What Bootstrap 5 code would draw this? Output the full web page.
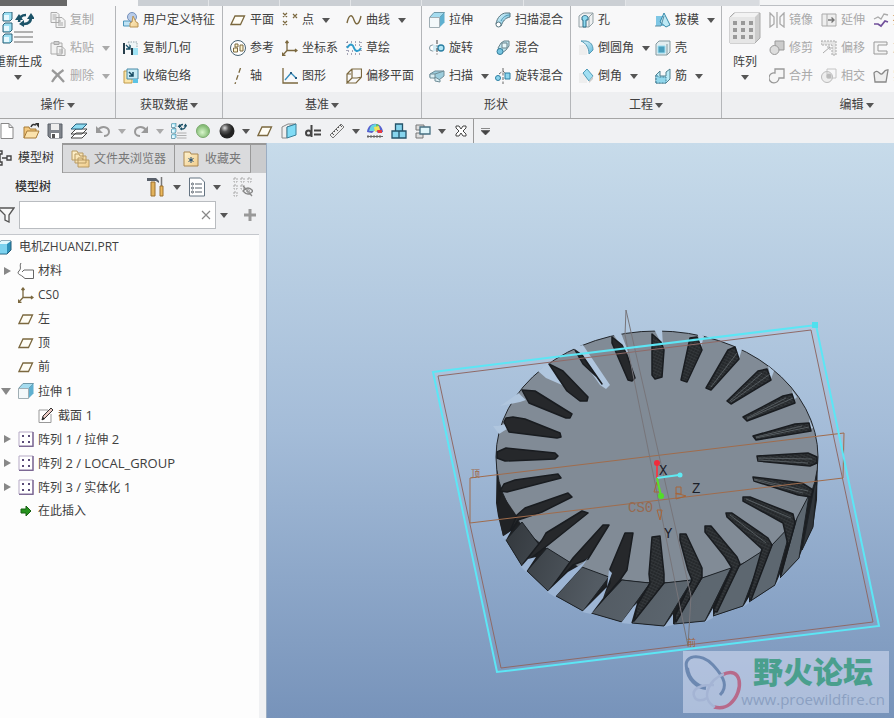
<!DOCTYPE html>
<html lang="zh-CN">
<head>
<meta charset="utf-8">
<meta name="viewport" content="width=device-width, initial-scale=1">
<title>电机ZHUANZI.PRT</title>
<link href="https://cdn.jsdelivr.net/npm/bootstrap@5.3.0/dist/css/bootstrap.min.css" rel="stylesheet">
<style>
body{font:12px/16px "Open Sans","Noto Sans CJK SC",sans-serif;color:#404040;background:#f0f1f3;overflow:hidden}
button{font:inherit;color:inherit;background:none;border:0;padding:0;white-space:nowrap}
button:disabled{color:#a9a9a9}
svg{flex:none;display:block}
.ico{width:16px;height:16px;overflow:visible}
.caret{flex:none;border:4px solid transparent;border-top:5px solid #555;border-bottom:0}
button:disabled .caret{border-top-color:#aaa}
.tabstrip{height:6px;background:#cbcfd4}
.tabstrip span{flex:0 0 71px;border-right:1px solid #e3e5e8}
.tabstrip .t-file{flex-basis:67px;background:#686868;border:0}
.tabstrip .t-on{background:#f8f8f9;border:0}
.tabstrip .t-wide{flex-basis:102px}
.tabstrip .t-alt{flex-basis:134px;background:#d8dbdf}
.tabstrip .t-rest{flex:1;background:#f3f4f5;border:0;border-bottom:1px solid #bcbfc3}
.ribbon{border-bottom:1px solid #a5a5a5;background:#f8f8f9}
.grp{flex:none;border-right:1px solid #b4b6b9}
.grp-body{height:86px;padding-left:7px}
.grp-foot{height:26px;background:#eeeff1;gap:2px}
.g-op{width:116px}.g-op .grp-body{padding:0}
.g-get{width:107px}.g-dat{width:199px}.g-shp{width:149px}.g-eng{width:151px}.g-edit{flex:1 0 270px}
.g-op .big{margin-left:-6px;width:48px;margin-right:8px}
.g-edit .big{width:32px;margin-right:8px}
.cmd{height:28px;gap:4px}
.c52{width:52px}.c64{width:64px}.c66{width:66px}.c77{width:77px}
.big .pic{width:32px;height:32px;margin-top:6px;margin-bottom:10px}
.big .caret{margin-top:5px}
.quick{height:24px;margin-left:-5px}
.quick button{width:24px;height:24px}
.quick .drop{width:14px}
.quick .more{border-left:1px solid #999}
.side{width:267px;background:#f0f1f3;border-right:1px solid #9badc2}
.ptabs{border-top:2px solid #999;background:#cacbcd;height:30px}
.ptabs button{color:#777;background:#dadbdd;border-right:1px solid #999;border-bottom:1px solid #aaa}
.ptabs .on{color:#333;background:#f0f1f3;border-bottom:0;width:63px;gap:6px;margin-top:-2px}
.pt2{width:112px;gap:4px}.pt3{width:76px;gap:6px}
.phead{height:28px;padding-left:15px}
.phead .title-txt{width:132px;color:#333;font-weight:500}
.pfilter{height:28px;margin-bottom:5px}
.pfilter .box{width:197px;height:28px;background:#fff;border:1px solid #b9bcc0;margin-left:4px}
.pfilter input{border:0;outline:0;background:none;min-width:0}
.tree{background:#fdfdfd;border-top:1px solid #c4c7cc;margin-right:7px}
.tree li{height:24px;gap:4px;white-space:nowrap}
.tree .tw{width:14px;flex:none;padding-left:4px}
.tree .lv0{margin-left:-4px;gap:7px}
.tree .lv2{padding-left:20px}
.lat{font-size:13px}
.tri-r{display:block;width:0;border:4px solid transparent;border-left:7px solid #888;border-right:0}
.tri-d{display:block;width:0;margin-left:-3px;border:5px solid transparent;border-top:7px solid #888;border-bottom:0}
.view{background:linear-gradient(#c7dbea,#a4bcd8 50%,#7793ba);min-width:0}
.scene{width:100%;height:100%}
.mono{font-family:"Liberation Mono",monospace;font-size:14px}
.wm{right:5px;bottom:5px;width:206px;height:62px;background:rgba(206,217,239,.62);overflow:hidden}
.wm-name{font:900 30px/38px "Noto Sans CJK SC",sans-serif;color:#4a9f8d}
.wm-url{font:15px/20px "Open Sans",sans-serif;color:#8ba0c2}
</style>
<script src="https://cdn.jsdelivr.net/npm/bootstrap@5.3.0/dist/js/bootstrap.bundle.min.js"></script>
</head>
<body class="vh-100 d-flex flex-column">
<svg class="position-absolute" width="0" height="0" aria-hidden="true">
<defs>
<linearGradient id="cy" x2="1" y2="1"><stop stop-color="#e6f8fc"/><stop offset="1" stop-color="#5fb9dc"/></linearGradient>
<linearGradient id="tan" x2="1" y2="1"><stop stop-color="#fff3cf"/><stop offset="1" stop-color="#f0cd8c"/></linearGradient>
<radialGradient id="grn" cx=".45" cy=".6"><stop stop-color="#d9f6cd"/><stop offset="1" stop-color="#86bd77"/></radialGradient>
<radialGradient id="blk" cx=".35" cy=".3"><stop stop-color="#ddd"/><stop offset=".5" stop-color="#555"/><stop offset="1" stop-color="#222"/></radialGradient>
<symbol id="plane" viewBox="0 0 16 16"><path d="M5 4h9.500l-4 8.500H1z" fill="#fffdf5" stroke="#7b683f" stroke-width="1.300"/></symbol>
<symbol id="csys" viewBox="0 0 16 16"><g fill="none" stroke="#7b683f" stroke-width="1.300"><path d="M5 1v9.500h10M5 10.500l-4.500 5M3.500 3L5 1l1.500 2M13 9l2 1.500-2 1.500M.5 12.500v3h3"/></g></symbol>
<symbol id="copy" viewBox="0 0 16 16"><g fill="#f2f2f2" stroke="#aaa"><path d="M1 .5h6l2 2v8H1zM6 5.500h6l3 3v7H6z"/><path d="M2.500 3h4M2.500 5h4M2.500 7h3M8 9h3M8 11h5M8 13h5"/></g></symbol>
<symbol id="paste" viewBox="0 0 16 16"><g fill="#f2f2f2" stroke="#aaa"><path d="M1 3h11v11H1zM4 1.500h5v3H4zM7 6.500h5l3 3v6H7z"/><path d="M9 10h4M9 12h4"/></g></symbol>
<symbol id="del" viewBox="0 0 16 16"><path d="M2 2c4 3 8 7 12 12M13.500 2C9 5 5 9 2 14" stroke="#999" stroke-width="2.200" fill="none"/></symbol>
<symbol id="udf" viewBox="0 0 16 16"><path d="M.5 9h7v5h-7z" fill="#bfe3f5" stroke="#4c95ba"/><circle cx="9" cy="5" r="4.500" fill="#b9cce8" stroke="#7590bb"/><path d="M10 4l3 6 2 1v4H7v-4l2-1z" fill="url(#tan)" stroke="#b99252"/></symbol>
<symbol id="cgeo" viewBox="0 0 16 16"><path d="M5 2h9v8H9z" fill="#eef5f7" stroke="#95a7ad" stroke-dasharray="1.500 1"/><path d="M9 8h6v7H9z" fill="#9fe3f5"/><path d="M1 3v11M9 8v7" stroke="#253d4a" stroke-width="2"/><path d="M3 5l4 4M7 5v4H3" stroke="#1b546d" fill="none" stroke-width="1.300"/></symbol>
<symbol id="shrink" viewBox="0 0 16 16"><path d="M1 3h8v12H1z" fill="#fbe5a9" stroke="#c09a49"/><path d="M4 1h11v10H4z" fill="#c9ebf5" stroke="#498ba8"/><path d="M6 4l4 4M10 4v4H6" stroke="#174b63" fill="none" stroke-width="1.500"/><path d="M10 11h5v4h-5z" fill="#5cc3e5"/></symbol>
<symbol id="pts" viewBox="0 0 16 16"><path d="M1 1l4 4m0-4L1 5M11 2l4 4m0-4l-4 4M1 9l4 4m0-4l-4 4" stroke="#7b683f" stroke-width="1.200"/></symbol>
<symbol id="curve" viewBox="0 0 16 16"><path d="M1 11C3 2 6 2 8 8s5 5 7-4" fill="none" stroke="#7b683f" stroke-width="1.400"/></symbol>
<symbol id="refs" viewBox="0 0 16 16"><circle cx="8" cy="8" r="7.500" fill="#fff" stroke="#476272"/><path d="M3.500 8h4v4h-4zM5 4h3v3H5zM10 5h3v6h-3z" fill="#fff4ce" stroke="#7b683f"/></symbol>
<symbol id="sketch" viewBox="0 0 16 16"><path d="M1 2h14M1 14h14M1 2v12M15 2v12M5 5h9M2 11h9" stroke="#557" stroke-dasharray="1 3"/><path d="M1 8C5 2 7 5 8 8s4 5 7 0" fill="none" stroke="#2c9bcb" stroke-width="2"/></symbol>
<symbol id="axis" viewBox="0 0 16 16"><path d="M10.500 0L5 16" stroke="#7b683f" stroke-width="1.300" stroke-dasharray="5 2.500"/></symbol>
<symbol id="graph" viewBox="0 0 16 16"><path d="M1 0v15h15" fill="none" stroke="#7b683f" stroke-width="1.300"/><path d="M3 12l6-7 5 5" stroke="#358dbd" fill="none" stroke-width="1.300"/><path d="M8 4h2v2H8zM13 9h2v2h-2z" fill="#255c83"/></symbol>
<symbol id="oplane" viewBox="0 0 16 16"><path d="M6 1h9.500v8L11 10H6zM6 1L1 6v9l5-5M1 15h9l5.500-6M1 6h4" fill="none" stroke="#7b683f" stroke-width="1.200"/></symbol>
<symbol id="extr" viewBox="0 0 16 16"><path d="M5 .5h10.500l-5 5H.5z" fill="#a5dcef" stroke="#6f98a8"/><path d="M10.500 5.500l5-5v10l-5 5z" fill="#5fb0d0"/><path d="M.5 5.500h10v10H.5z" fill="#f3f8fa" stroke="#a0aeb4"/></symbol>
<symbol id="rev" viewBox="0 0 16 16"><circle cx="3.500" cy="8" r="3" fill="#fff" stroke="#7f949e"/><path d="M4 5h8v6H4z" fill="#d5edf5"/><circle cx="12" cy="8" r="3" fill="#b1e5f5" stroke="#2b7fa3" stroke-width="1.300"/><path d="M8 0v16" stroke="#444" stroke-dasharray="4 1.500 1 1.500"/></symbol>
<symbol id="sweep" viewBox="0 0 16 16"><path d="M1 6l5-3h9v5l-5 4-4-2-5-1z" fill="#9ccddd" stroke="#708d99"/><path d="M1 6h5v4H1zM6 6l9-3M6 9l5 3v2l-5-1z" fill="#dceff4" stroke="#718e98"/></symbol>
<symbol id="sblend" viewBox="0 0 16 16"><path d="M1 12C2 5 7 1 11 1h4v4c-5 1-7 4-9 9z" fill="url(#cy)" stroke="#56747f"/><circle cx="3.500" cy="12.500" r="2.500" fill="#fff" stroke="#56747f"/><path d="M6 9c2-4 5-6 9-6" fill="none" stroke="#4c94b2"/></symbol>
<symbol id="blend" viewBox="0 0 16 16"><path d="M6 3l3-2h5v5l-3 4-4 3-4-5z" fill="#c1e4ee" stroke="#66818a"/><path d="M7 3h5v5H7z" fill="#e8f7fa" stroke="#66818a"/><circle cx="5" cy="11.500" r="3" fill="#77c5e1" stroke="#337b99"/></symbol>
<symbol id="rblend" viewBox="0 0 16 16"><circle cx="3" cy="10" r="2.500" fill="#8fd5ec" stroke="#2b7fa3"/><path d="M10 5h5v6h-5z" fill="#8fd5ec" stroke="#2b7fa3"/><path d="M4 6l4-3 2 2M8 0v16" fill="none" stroke="#666" stroke-dasharray="3 1.500"/></symbol>
<symbol id="hole" viewBox="0 0 16 16"><path d="M1 4l4-3h10v10l-4 4H1z" fill="#eef0f1" stroke="#92a0a5"/><path d="M11 5v10M11 5l4-4" stroke="#92a0a5"/><path d="M4 5c2-2 4-2 6 0v3H8v7H5V8H4z" fill="#8fd9ef" stroke="#2d6c87"/></symbol>
<symbol id="round" viewBox="0 0 16 16"><path d="M1 5h8v10H1z" fill="#eee"/><path d="M3 1h5c5 1 7 4 7 9l-4 4c0-6-3-11-8-13z" fill="url(#cy)" stroke="#559ab5"/></symbol>
<symbol id="chamf" viewBox="0 0 16 16"><path d="M1 5h8v10H1z" fill="#eee"/><path d="M5 5l4-4 6 7-4 5z" fill="#a1dff2" stroke="#4f9bb8"/><path d="M11 13l4-5v3l-4 4z" fill="#ccc"/></symbol>
<symbol id="draft" viewBox="0 0 16 16"><path d="M1 4h8v10H1z" fill="#7fc7e5"/><path d="M9 1l6 12-4 2-6-5z" fill="#bde9f5" stroke="#378aab"/><path d="M0 14h6l3-10" stroke="#5d8da2" fill="none"/></symbol>
<symbol id="shell" viewBox="0 0 16 16"><path d="M1 4l3-3h11v11l-3 3H1z" fill="#e2edf0" stroke="#84999f"/><path d="M12 4v11" stroke="#84999f"/><path d="M3 6h7v7H3z" fill="#4b9fbd" stroke="#9edef2"/></symbol>
<symbol id="rib" viewBox="0 0 16 16"><path d="M1 7l4-4v5h6V4l4-3v10l-4 4H1z" fill="#bcebf7" stroke="#51808f"/><path d="M1 15V7l3 2h7v6z" fill="#91d7ec" stroke="#407f98" stroke-dasharray="2 1"/></symbol>
<symbol id="mirror" viewBox="0 0 16 16"><path d="M1 1l4 4v7l-4 3zM15 1l-4 4v7l4 3zM8 0v16" fill="none" stroke="#aaa" stroke-width="1.300"/></symbol>
<symbol id="trim" viewBox="0 0 16 16"><path d="M6 1h9v9H6z" fill="#ccc" stroke="#999"/><circle cx="5.500" cy="10" r="4.500" fill="#ddd" stroke="#999"/></symbol>
<symbol id="merge" viewBox="0 0 16 16"><path d="M6 1h9v9h-5a5 5 0 1 1-4-5z" fill="#f5f5f5" stroke="#999" stroke-width="1.300"/></symbol>
<symbol id="inter" viewBox="0 0 16 16"><circle cx="6" cy="9" r="5.500" fill="#eee" stroke="#bbb"/><path d="M6 1h9v9H6z" fill="none" stroke="#c4c4c4"/><circle cx="8" cy="8" r="2.500" fill="#bbb"/></symbol>
<symbol id="extend" viewBox="0 0 16 16"><path d="M1 2h5v12H1zM6 2h9v12H6" fill="#eee" stroke="#aaa"/><path d="M7 8h6M10.500 5.500L13 8l-2.500 2.500" fill="none" stroke="#777" stroke-width="1.400"/></symbol>
<symbol id="offset" viewBox="0 0 16 16"><path d="M0 1h15v14h-4V5H0z" fill="#e4e4e4" stroke="#aaa" stroke-dasharray="2 1"/><path d="M2 13l7-6M6 7h3v3" fill="none" stroke="#aaa"/></symbol>
<symbol id="proj" viewBox="0 0 16 16"><path d="M1 7l4-2 3 2 3-5 4 1" fill="none" stroke="#aaa" stroke-width="1.300"/><path d="M1 12h4l3 2 4-5 3 1" fill="none" stroke="#71509b" stroke-width="1.700"/></symbol>
<symbol id="thick" viewBox="0 0 16 16"><path d="M14 2H1v12h13v-3H5V5h9z" fill="#f4f4f4" stroke="#999"/></symbol>
<symbol id="solid" viewBox="0 0 16 16"><path d="M1 5c4-5 6 4 9 0s4-3 5-3l-2 12H2z" fill="#eee" stroke="#888" stroke-width="1.300"/></symbol>
<symbol id="patt" viewBox="0 0 16 16"><path d="M1 1h14v14H1z" fill="#fff" stroke="#b5a9c5"/><path d="M15 1v14.500H1" fill="none" stroke="#7c6894" stroke-width="1.400"/><path d="M4 4h2v2H4zM10 4h2v2h-2zM4 10h2v2H4zM10 10h2v2h-2z" fill="#594b78"/></symbol>
<symbol id="regen" viewBox="0 0 32 32"><g fill="#9ce0f4" stroke="#2c6177"><path d="M1 2l2-2h7v7l-2 2H1zM1 13l2-2h7v7l-2 2H1zM1 24l2-2h7v7l-2 2H1z"/></g><g fill="#e6f9ff"><path d="M2 3h5v5H2zM2 14h5v5H2zM2 25h5v5H2z"/></g><path d="M12 20h19M12 25h19M12 30h19" stroke="#999" stroke-width="1.500"/><path d="M17 10c0-5 3-7 7-7M29 5c0 5-3 7-7 7" fill="none" stroke="#1c5368" stroke-width="2.600"/><path d="M13 8h8l-4-6zM25 7h8l-4-6zM22 8v7l-5-3z" fill="#1c5368"/></symbol>
<symbol id="cube" viewBox="0 0 16 16"><path d="M1 5l4-3h10v9l-4 4H1z" fill="#2d91b9" stroke="#255d78"/><path d="M1.500 5h9.500v9.500H1.500z" fill="#7ed3ef"/><path d="M2 5l3-3h10l-4 3z" fill="#e1f8fd"/></symbol>
<symbol id="folder" viewBox="0 0 16 16"><path d="M1 3V1h6l1 2h7v12H1z" fill="url(#tan)" stroke="#aa8750"/></symbol>
</defs>
</svg>

<div class="tabstrip d-flex flex-shrink-0"><span class="t-file"></span><span class="t-on"></span><span></span><span></span><span></span><span></span><span class="t-wide"></span><span class="t-wide"></span><span class="t-alt"></span><span class="t-rest"></span></div>
<header class="ribbon d-flex flex-shrink-0 overflow-hidden">
 <section class="grp g-op">
  <div class="grp-body d-flex">
   <button class="big d-flex flex-column align-items-center"><svg class="pic"><use href="#regen"/></svg><span>重新生成</span><i class="caret"></i></button>
   <div>
    <button class="cmd d-flex align-items-center" disabled><svg class="ico"><use href="#copy"/></svg>复制</button>
    <button class="cmd d-flex align-items-center" disabled><svg class="ico"><use href="#paste"/></svg>粘贴<i class="caret ms-1"></i></button>
    <button class="cmd d-flex align-items-center" disabled><svg class="ico"><use href="#del"/></svg>删除<i class="caret ms-1"></i></button>
   </div>
  </div>
  <button class="grp-foot w-100 d-flex align-items-center justify-content-center">操作<i class="caret"></i></button>
 </section>
 <section class="grp g-get">
  <div class="grp-body">
   <button class="cmd d-flex align-items-center"><svg class="ico"><use href="#udf"/></svg>用户定义特征</button>
   <button class="cmd d-flex align-items-center"><svg class="ico"><use href="#cgeo"/></svg>复制几何</button>
   <button class="cmd d-flex align-items-center"><svg class="ico"><use href="#shrink"/></svg>收缩包络</button>
  </div>
  <button class="grp-foot w-100 d-flex align-items-center justify-content-center">获取数据<i class="caret"></i></button>
 </section>
 <section class="grp g-dat">
  <div class="grp-body d-flex">
   <div class="c52">
    <button class="cmd d-flex align-items-center"><svg class="ico"><use href="#plane"/></svg>平面</button>
    <button class="cmd d-flex align-items-center"><svg class="ico"><use href="#refs"/></svg>参考</button>
    <button class="cmd d-flex align-items-center"><svg class="ico"><use href="#axis"/></svg>轴</button>
   </div>
   <div class="c64">
    <button class="cmd d-flex align-items-center"><svg class="ico"><use href="#pts"/></svg>点<i class="caret ms-1"></i></button>
    <button class="cmd d-flex align-items-center"><svg class="ico"><use href="#csys"/></svg>坐标系</button>
    <button class="cmd d-flex align-items-center"><svg class="ico"><use href="#graph"/></svg>图形</button>
   </div>
   <div>
    <button class="cmd d-flex align-items-center"><svg class="ico"><use href="#curve"/></svg>曲线<i class="caret ms-1"></i></button>
    <button class="cmd d-flex align-items-center"><svg class="ico"><use href="#sketch"/></svg>草绘</button>
    <button class="cmd d-flex align-items-center"><svg class="ico"><use href="#oplane"/></svg>偏移平面</button>
   </div>
  </div>
  <button class="grp-foot w-100 d-flex align-items-center justify-content-center">基准<i class="caret"></i></button>
 </section>
 <section class="grp g-shp">
  <div class="grp-body d-flex">
   <div class="c66">
    <button class="cmd d-flex align-items-center"><svg class="ico"><use href="#extr"/></svg>拉伸</button>
    <button class="cmd d-flex align-items-center"><svg class="ico"><use href="#rev"/></svg>旋转</button>
    <button class="cmd d-flex align-items-center"><svg class="ico"><use href="#sweep"/></svg>扫描<i class="caret ms-1"></i></button>
   </div>
   <div>
    <button class="cmd d-flex align-items-center"><svg class="ico"><use href="#sblend"/></svg>扫描混合</button>
    <button class="cmd d-flex align-items-center"><svg class="ico"><use href="#blend"/></svg>混合</button>
    <button class="cmd d-flex align-items-center"><svg class="ico"><use href="#rblend"/></svg>旋转混合</button>
   </div>
  </div>
  <div class="grp-foot d-flex align-items-center justify-content-center">形状</div>
 </section>
 <section class="grp g-eng">
  <div class="grp-body d-flex">
   <div class="c77">
    <button class="cmd d-flex align-items-center"><svg class="ico"><use href="#hole"/></svg>孔</button>
    <button class="cmd d-flex align-items-center"><svg class="ico"><use href="#round"/></svg>倒圆角<i class="caret ms-1"></i></button>
    <button class="cmd d-flex align-items-center"><svg class="ico"><use href="#chamf"/></svg>倒角<i class="caret ms-1"></i></button>
   </div>
   <div>
    <button class="cmd d-flex align-items-center"><svg class="ico"><use href="#draft"/></svg>拔模<i class="caret ms-1"></i></button>
    <button class="cmd d-flex align-items-center"><svg class="ico"><use href="#shell"/></svg>壳</button>
    <button class="cmd d-flex align-items-center"><svg class="ico"><use href="#rib"/></svg>筋<i class="caret ms-1"></i></button>
   </div>
  </div>
  <button class="grp-foot w-100 d-flex align-items-center justify-content-center">工程<i class="caret"></i></button>
 </section>
 <section class="grp g-edit">
  <div class="grp-body d-flex">
   <button class="big d-flex flex-column align-items-center"><svg class="pic" viewBox="0 0 32 32"><path d="M1 5l4-4h26v25l-5 5H1z" fill="#ccc" stroke="#aaa"/><path d="M1 5h25v26H1z" fill="#e6e6e6"/><path d="M2 5l4-4h24l-4 4z" fill="#f3f3f3"/><g stroke="#999" stroke-width="4" stroke-dasharray="4 4"><path d="M4 11h21M4 18h21M4 25h21"/></g></svg><span>阵列</span><i class="caret"></i></button>
   <div class="c52">
    <button class="cmd d-flex align-items-center" disabled><svg class="ico"><use href="#mirror"/></svg>镜像</button>
    <button class="cmd d-flex align-items-center" disabled><svg class="ico"><use href="#trim"/></svg>修剪</button>
    <button class="cmd d-flex align-items-center" disabled><svg class="ico"><use href="#merge"/></svg>合并</button>
   </div>
   <div class="c52">
    <button class="cmd d-flex align-items-center" disabled><svg class="ico"><use href="#extend"/></svg>延伸</button>
    <button class="cmd d-flex align-items-center" disabled><svg class="ico"><use href="#offset"/></svg>偏移</button>
    <button class="cmd d-flex align-items-center" disabled><svg class="ico"><use href="#inter"/></svg>相交</button>
   </div>
   <div>
    <button class="cmd d-flex align-items-center"><svg class="ico"><use href="#proj"/></svg>投影</button>
    <button class="cmd d-flex align-items-center" disabled><svg class="ico"><use href="#thick"/></svg>加厚</button>
    <button class="cmd d-flex align-items-center" disabled><svg class="ico"><use href="#solid"/></svg>实体化</button>
   </div>
  </div>
  <button class="grp-foot w-100 d-flex align-items-center justify-content-center">编辑<i class="caret"></i></button>
 </section>
</header>

<nav class="quick d-flex align-items-center flex-shrink-0" aria-label="快速访问">
 <button class="d-flex align-items-center justify-content-center" aria-label="新建"><svg class="ico" viewBox="0 0 16 16"><path d="M2 .5h8l4 4v11H2zM10 .5v4h4" fill="#fff" stroke="#888"/></svg></button>
 <button class="d-flex align-items-center justify-content-center" aria-label="打开"><svg class="ico" viewBox="0 0 16 16"><path d="M1 15V4h5l1 2h6v3" fill="#f3c87d" stroke="#a77a36"/><path d="M1 15l3-7h12l-3 7z" fill="#fbe2ac" stroke="#a77a36"/><path d="M8 4c1-3 3-3 5-2" fill="none" stroke="#333" stroke-width="1.500"/><path d="M12 0h4v5z" fill="#333"/></svg></button>
 <button class="d-flex align-items-center justify-content-center" aria-label="保存"><svg class="ico" viewBox="0 0 16 16"><path d="M1 1h14v14H3l-2-2z" fill="#80858c" stroke="#5b6068"/><path d="M4 1h8v6H4z" fill="#eee"/><path d="M4 10h8v5H4z" fill="#fff"/><path d="M5 11h3v4H5z" fill="#555"/></svg></button>
 <button class="d-flex align-items-center justify-content-center" aria-label="层"><svg class="ico" viewBox="0 0 16 16"><path d="M5 10h11l-5 5H0zM5 6h11l-5 5H0z" fill="#fff" stroke="#444"/><path d="M5 1h11l-5 5H0z" fill="#8fdcf2" stroke="#28617d"/></svg></button>
 <button class="d-flex align-items-center justify-content-center" aria-label="撤消"><svg class="ico" viewBox="0 0 16 16"><path d="M3 7c4-5 11-3 11 2 0 3-3 4-5 4" fill="none" stroke="#999" stroke-width="2"/><path d="M1 3v7h7z" fill="#999"/></svg></button>
 <button class="drop d-flex justify-content-center align-items-center" disabled aria-label="撤消列表"><i class="caret"></i></button>
 <button class="d-flex align-items-center justify-content-center" aria-label="重做"><svg class="ico" viewBox="0 0 16 16"><path d="M13 7C9 2 2 4 2 9c0 3 3 4 5 4" fill="none" stroke="#999" stroke-width="2"/><path d="M15 3v7H8z" fill="#999"/></svg></button>
 <button class="drop d-flex justify-content-center align-items-center" disabled aria-label="重做列表"><i class="caret"></i></button>
 <button class="d-flex align-items-center justify-content-center" aria-label="重新生成"><svg class="ico"><use href="#regen"/></svg></button>
 <button class="d-flex align-items-center justify-content-center" aria-label="外观"><svg class="ico" viewBox="0 0 16 16"><circle cx="8" cy="8" r="6.500" fill="url(#grn)" stroke="#7cab70"/></svg></button>
 <button class="d-flex align-items-center justify-content-center" aria-label="着色"><svg class="ico" viewBox="0 0 16 16"><circle cx="8" cy="8" r="7.500" fill="url(#blk)"/></svg></button>
 <button class="drop d-flex justify-content-center align-items-center" aria-label="着色列表"><i class="caret"></i></button>
 <button class="d-flex align-items-center justify-content-center" aria-label="平面"><svg class="ico"><use href="#plane"/></svg></button>
 <button class="d-flex align-items-center justify-content-center" aria-label="视图"><svg class="ico" viewBox="0 0 16 16"><path d="M1 4l6-3h8l-9 3v11H1z" fill="#eee" stroke="#888"/><path d="M6 4l9-3v11l-9 3z" fill="#80dbf5" stroke="#397e98"/></svg></button>
 <button class="d-flex align-items-center justify-content-center" aria-label="尺寸"><svg class="ico" viewBox="0 0 16 16"><g fill="none" stroke="#444" stroke-width="2"><circle cx="3.500" cy="10" r="2.500"/><path d="M6.500 2v12M9 7.500h7M9 11.500h7"/></g></svg></button>
 <button class="d-flex align-items-center justify-content-center" aria-label="测量"><svg class="ico" viewBox="0 0 16 16"><path d="M1 12L12 1l3 3L4 15z" fill="#eee" stroke="#777"/><path d="M3 10l2 2M5 8l1 1M7 6l2 2M9 4l1 1M11 2l2 2" stroke="#555"/></svg></button>
 <button class="drop d-flex justify-content-center align-items-center" aria-label="测量列表"><i class="caret"></i></button>
 <button class="d-flex align-items-center justify-content-center" aria-label="分析"><svg class="ico" viewBox="0 0 16 16"><path d="M0 9C1-2 15-2 16 9l-5 1-3-3-3 3z" fill="#5660cf"/><path d="M5 3l6-2 2 7H7z" fill="#62cc56"/><path d="M3 5c1-3 3-4 6-4v7H2z" fill="#65d4df"/><path d="M7 4l5-1 1 4-5 2z" fill="#f0e359"/><path d="M10 7h5v3h-4z" fill="#e53c43"/><path d="M0 13.500h16M1 12v3M4 12v3M7 12v3M10 12v3M13 12v3" stroke="#666"/></svg></button>
 <button class="d-flex align-items-center justify-content-center" aria-label="装配"><svg class="ico" viewBox="0 0 16 16"><path d="M4.500 1h7v7h-7zM1 8h7v7H1zM8 8h7v7H8z" fill="#86d4ed" stroke="#24536a" stroke-width="1.300"/></svg></button>
 <button class="d-flex align-items-center justify-content-center" aria-label="窗口"><svg class="ico" viewBox="0 0 16 16"><path d="M1 2h8v5H1zM1 10h7v5H1z" fill="#ddd" stroke="#777"/><path d="M5 4h10v7H5z" fill="#dff5fa" stroke="#456e80" stroke-width="1.300"/></svg></button>
 <button class="drop d-flex justify-content-center align-items-center" aria-label="窗口列表"><i class="caret"></i></button>
 <button class="d-flex align-items-center justify-content-center" aria-label="关闭"><svg class="ico" viewBox="0 0 16 16"><path d="M3 3h3l2 3 2-3h3v2l-3 3 3 3v2h-3l-2-3-2 3H3v-2l3-3-3-3z" fill="#fff" stroke="#444"/></svg></button>
 <button class="more d-flex flex-column align-items-center justify-content-center" aria-label="自定义"><svg width="9" height="7"><path d="M0 .5h9M0 2.500h9L4.500 7z" fill="#444" stroke="#444" stroke-width=".6"/></svg></button>
</nav>

<main class="d-flex flex-grow-1 overflow-hidden">
 <aside class="side d-flex flex-column flex-shrink-0">
  <div class="ptabs d-flex flex-shrink-0">
   <button class="on d-flex align-items-center"><svg width="12" height="16" viewBox="0 0 12 16"><path d="M0 1h2v3H0M0 12h2v3H0M2 8h5M0 4v8M7 6h4v4H7z" fill="none" stroke="#444" stroke-width="1.400"/></svg>模型树</button>
   <button class="pt2 d-flex align-items-center ps-2"><svg width="19" height="18" viewBox="0 0 19 18"><g fill="url(#tan)" stroke="#b89a63"><path d="M1 10V1h5l1 2h5v7zM4 13V4h4l1 2h6v7zM7 17V8h4l1 2h6v7z"/></g></svg>文件夹浏览器</button>
   <button class="pt3 d-flex align-items-center ps-2"><svg class="ico" viewBox="0 0 16 16"><use href="#folder"/><path d="M8 6v6M5.500 7.500l5 3M10.500 7.500l-5 3" stroke="#234d72"/></svg>收藏夹</button>
  </div>
  <div class="phead d-flex align-items-center flex-shrink-0">
   <span class="title-txt">模型树</span>
   <button aria-label="设置"><svg width="18" height="20" viewBox="0 0 18 20"><path d="M0 1h9l3 3v2L9 4H0z" fill="#59606a"/><path d="M4 5h4v14H4z" fill="#e2b25b" stroke="#9b7030"/><path d="M14.500 0v9" stroke="#777" stroke-width="1.500"/><path d="M13 9h3v10h-3z" fill="#edb95b" stroke="#9b7030"/></svg></button>
   <i class="caret ms-2"></i>
   <button class="ms-2" aria-label="显示"><svg width="16" height="20" viewBox="0 0 16 20"><path d="M.5 1h11l4 4v14H.5z" fill="#fff" stroke="#657482"/><path d="M6 7h7M6 11h7M6 15h7" stroke="#57616b"/><g fill="none" stroke="#57616b"><circle cx="3.500" cy="7" r="1"/><circle cx="3.500" cy="11" r="1"/><circle cx="3.500" cy="15" r="1"/></g></svg></button>
   <i class="caret ms-2"></i>
   <button class="ms-2 ps-1" disabled aria-label="隐藏"><svg width="20" height="20" viewBox="0 0 20 20"><g fill="none" stroke="#aaa"><path d="M1 1h3v4H1zM1 8h3v4H1zM1 15h3v4H1zM8 1h3v4H8zM15 1h3v4h-3zM8 8h3v4H8z" stroke-dasharray="2 1"/><path d="M10 14q5-6 10 0-5 6-10 0zM10 9l9 10" stroke="#888" stroke-width="1.300"/><circle cx="15" cy="14" r="1.500"/></g></svg></button>
  </div>
  <div class="pfilter d-flex align-items-center flex-shrink-0">
   <svg width="15" height="16" viewBox="0 0 15 16"><path d="M-2 1h16L9 8v7l-4-2V8z" fill="#f8f8f8" stroke="#555" stroke-width="1.300"/></svg>
   <div class="box d-flex align-items-center pe-1"><input class="flex-grow-1" type="text" aria-label="筛选"><button aria-label="清除"><svg width="10" height="10"><path d="M1 1l8 8M9 1L1 9" stroke="#888" stroke-width="1.200"/></svg></button></div>
   <i class="caret ms-1 me-3"></i>
   <button aria-label="添加"><svg width="12" height="12"><path d="M6 0v12M0 6h12" stroke="#999" stroke-width="3"/></svg></button>
  </div>
  <ul class="tree list-unstyled mb-0 flex-grow-1">
   <li class="lv0 d-flex align-items-center"><svg class="ico"><use href="#cube"/></svg>电机ZHUANZI.PRT</li>
   <li class="d-flex align-items-center"><span class="tw"><i class="tri-r"></i></span><svg class="ico" viewBox="0 0 16 16"><path d="M3 0C1 3 4 5 1 8s2 4 3 5l3 2.500h8.500V7H6L4 9" fill="#fff" stroke="#666"/></svg>材料</li>
   <li class="d-flex align-items-center"><span class="tw"></span><svg class="ico"><use href="#csys"/></svg>CS0</li>
   <li class="d-flex align-items-center"><span class="tw"></span><svg class="ico"><use href="#plane"/></svg>左</li>
   <li class="d-flex align-items-center"><span class="tw"></span><svg class="ico"><use href="#plane"/></svg>顶</li>
   <li class="d-flex align-items-center"><span class="tw"></span><svg class="ico"><use href="#plane"/></svg>前</li>
   <li class="d-flex align-items-center"><span class="tw"><i class="tri-d"></i></span><svg class="ico"><use href="#extr"/></svg><span>拉伸<span class="lat"> 1</span></span></li>
   <li class="lv2 d-flex align-items-center"><span class="tw"></span><svg class="ico" viewBox="0 0 16 16"><path d="M1 3h9M13 7v8.500H1V3" fill="#fff" stroke="#999"/><path d="M4 13l1-4 8-8 2 2-8 8z" fill="#eac9c2" stroke="#333"/><path d="M4 13l1-3 2 2z" fill="#222"/></svg><span>截面<span class="lat"> 1</span></span></li>
   <li class="d-flex align-items-center"><span class="tw"><i class="tri-r"></i></span><svg class="ico"><use href="#patt"/></svg><span>阵列<span class="lat"> 1 / </span>拉伸<span class="lat"> 2</span></span></li>
   <li class="d-flex align-items-center"><span class="tw"><i class="tri-r"></i></span><svg class="ico"><use href="#patt"/></svg><span>阵列<span class="lat"> 2 / LOCAL_GROUP</span></span></li>
   <li class="d-flex align-items-center"><span class="tw"><i class="tri-r"></i></span><svg class="ico"><use href="#patt"/></svg><span>阵列<span class="lat"> 3 / </span>实体化<span class="lat"> 1</span></span></li>
   <li class="d-flex align-items-center"><span class="tw"></span><svg class="ico" viewBox="0 0 16 16"><path d="M3 6h5V3l5 5-5 5v-3H3z" fill="#27931e" stroke="#176112"/></svg>在此插入</li>
  </ul>
 </aside>
 <section class="view flex-grow-1 position-relative">
  <svg class="scene" viewBox="267 143 627 575" role="img" aria-label="转子模型">
   <defs>
    <linearGradient id="rim" gradientUnits="userSpaceOnUse" x1="500" x2="700" y1="540" y2="600"><stop stop-color="#33383d"/><stop offset=".5" stop-color="#535b63"/><stop offset="1" stop-color="#5d6770"/></linearGradient>
    <pattern id="hatch" width="3" height="3" patternUnits="userSpaceOnUse" patternTransform="rotate(25)"><path d="M0 0h3v3H0z" fill="#25282b"/><path d="M0 0v3M0 1.500h3" stroke="#3c4145" stroke-width=".6"/></pattern>
   </defs>
   <!-- rotor body and front face -->
   <path d="M497 450L496 503L498 516L503 536L506 540L522 566L527 571L548 591L556 596L583 611L591 613L622 622L632 623L664 626L674 624L705 621L713 616L743 606L749 602L775 585L780 578L799 558L802 550L813 527L817 500L818 458z" fill="#1d1f22"/>
   <ellipse cx="657" cy="457" rx="161" ry="126" fill="#818b96" stroke="#22262b"/>
   <g fill="url(#rim)" stroke="#1d2227">
    <path d="M522 522L506 540L522 566L540 546z"/><path d="M547 548L527 571L548 591L571 563z"/><path d="M582 567L556 596L583 611L609 577z"/><path d="M622 580L591 613L622 622L650 583z"/><path d="M664 583L632 623L664 626L692 580z"/><path d="M702 578L674 624L705 621L731 568z"/><path d="M739 566L713 616L743 606L764 550z"/><path d="M772 545L749 602L775 585L792 524z"/><path d="M797 518L780 578L799 558L809 495z"/><path d="M814 488L802 550L813 527L817 480z" fill="#30353a"/>
   </g>
   <path d="M502 494L497 508L503 536L512 530L519 519z" fill="#202225"/>
   <!-- open slot mouths on the far side -->
   <g fill="#b0c6de">
    <path d="M493 426h5l7-2 2 5-8 5zM500 406l19-13 5 4-8-6 10 9-6 2zM538 371L549 362L557 378L569 391L562 385L546 378zM573 347L583 345L610 385L606 389L600 385zM613 334L621 333L629 354L624 350zM654 329h8l1 18zM697 332l7 4-3 11zM735 344l7 5-3 10zM768 366l6 5-3 8zM792 390l5 7-3 3zM809 419l4 9-3 1z"/>
   </g>
   <g fill="#26282b" stroke="#191c20" stroke-linejoin="round" stroke-width="1.500">
    <path d="M555 453L506 448L497 452V458L505 461L555 459L558 456z"/>
    <path d="M506 418L513 417L525 419L560 433L561 437L557 438L509 432L504 422z"/>
    <path d="M522 390L535 391L572 414L570 418L566 418L529 403z"/>
    <path d="M549 364L563 371L588 397L587 401L580 401L567 391z"/>
    <path d="M575 350L582 355L602 384L597 377L583 364z"/>
    <path d="M612 337L622 345L627 355L635 378L632 381L628 380L612 343z"/>
    <path d="M625 533L633 533L627 570L620 580L593 611L610 583L610 569z"/>
    <path d="M603 525L609 525L588 559L573 565L550 590L573 558z"/>
    <path d="M582 511L588 513L548 545L535 555L523 564L542 540L546 533z"/>
    <path d="M568 493L572 497L542 512L518 520L508 536L517 515L525 508z"/>
    <path d="M558 474L561 478L507 492L500 491L504 484L515 480z"/>
   </g>
   <g fill="url(#hatch)" stroke="#191c20" stroke-linejoin="round" stroke-width="1.500">
    <path d="M652 334L661 342L664 350L662 377L655 379L652 375z"/><path d="M690 338L697 337L702 350L687 382L681 380z"/><path d="M728 350L735 347L739 359L711 390L706 388z"/><path d="M758 371L767 369L771 380L731 404L727 401z"/><path d="M783 396L792 394L795 403L747 421L743 417z"/><path d="M795 424L809 423L811 431L756 440L753 436z"/><path d="M757 456L808 453L817 457V463L810 466L758 461z"/><path d="M753 477L802 483L813 490L811 497L798 495L754 481z"/><path d="M743 497L750 497L793 514L795 523L781 575L788 545L783 523L743 501z"/><path d="M726 513L732 513L768 538L772 545L751 600L748 598L762 549L727 517z"/><path d="M705 526L711 526L737 557L740 564L717 612L713 611L732 568L725 557L705 532z"/><path d="M680 534L686 534L702 568L702 577L676 622L675 616L692 580L688 570L680 540z"/><path d="M652 537L660 536L664 574L664 583L634 621L637 606L650 583L649 574z"/>
   </g>
   <!-- background seen through the near slots -->
   <path d="M502 537l9-6-5 9zM521 567L528 559L536 557L526 572zM547 592L568 572L582 564L588 558L582 567L555 597zM582 612L607 587L609 570L612 573L603 598L591 614zM621 623L633 607L637 603L631 624zM664 627l9-13 0 11zM705 622l8-14 0 10zM743 607l6-10 0 6zM775 586l5-12v6z" fill="#9db5d4"/>
   <g fill="none" stroke="#71787e" stroke-width=".6"><path d="M758 458L812 459M758 460L808 463M756 438L809 427M756 437L802 426M747 419L793 398M747 418L786 398M731 402L770 374M730 401L762 373M711 387L737 353M754 479L808 491M754 480L803 493M746 499L791 518M730 515L766 543"/></g>
   <!-- datum planes -->
   <g fill="none" stroke-width="1">
    <path d="M438 376L811 330L873 622L501 668z" stroke="#8f6a67"/>
    <path d="M470 478L844 433L843 478L470 523z" stroke="#a06c4c"/>
    <path d="M626 310L691 596L688 646L625 335z" stroke="#77757a"/>
    <path d="M433 372L816 325L879 626L497 672z" stroke="#5ce6f5" stroke-width="2"/>
   </g>
   <path d="M812 322h6v6h-6z" fill="#4fe0ee"/>
   <g fill="#a06540" font-size="9"><text x="471" y="477">顶</text><text x="687" y="646">前</text></g>
   <!-- coordinate system -->
   <path d="M657 482l-3 10h6zM676 493l10 3-10 3zM657 510l3 10 2-10zM676 487h5v7h-5z" fill="none" stroke="#a76538"/>
   <g stroke-width="2" fill="none"><path d="M657 464v14" stroke="#e8404d"/><path d="M657 478l22-3" stroke="#5fe9f2"/><path d="M657 478l4 18" stroke="#5de02c"/></g>
   <circle cx="657" cy="463" r="3" fill="#f02c3c"/><circle cx="680" cy="475" r="2.500" fill="#5fe9f2"/><circle cx="661" cy="496" r="3" fill="#52dd27"/>
   <g class="mono" fill="#1c2029"><text x="659" y="475">X</text><text x="692" y="493">Z</text><text x="664" y="538">Y</text><text x="628" y="512" fill="#966a51">CS0</text></g>
  </svg>
  <div class="wm position-absolute">
   <svg class="position-absolute" width="60" height="62" viewBox="0 0 60 62" fill="none"><path d="M4 18C-1 4 18 1 30 14s15 22 7 30" stroke="#6c88b1" stroke-width="3"/><path d="M4 17c1 11 10 19 19 20" stroke="#6c88b1" stroke-width="4"/><path d="M39 24c20-11 23 16 8 29-6 5-12 4-16 3" stroke="#b76a8a" stroke-width="3.500"/><path d="M41 23c-14 5-25 24-9 33M31 34c-15-1-24 5-19 13 2 3 8 3 12 0" stroke="#a4b4d4" stroke-width="2.500"/></svg>
   <div class="d-flex flex-column align-items-end"><span class="wm-name me-3">野火论坛</span><span class="wm-url me-1">www.proewildfire.cn</span></div>
  </div>
 </section>
</main>
</body>
</html>
